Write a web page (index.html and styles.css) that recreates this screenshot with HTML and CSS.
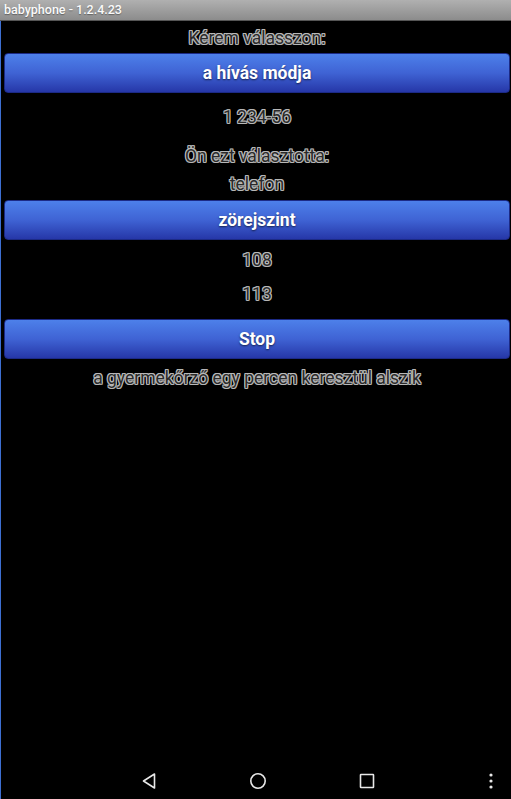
FILE: index.html
```html
<!DOCTYPE html>
<html lang="hu">
<head>
<meta charset="utf-8">
<title>babyphone</title>
<link rel="stylesheet" href="styles.css">
</head>
<body>
<div class="app">
  <header class="titlebar">babyphone - 1.2.4.23</header>
  <main class="screen">
    <section class="content">
      <div class="label prompt">Kérem válasszon:</div>
      <button class="btn btn-first">a hívás módja</button>
      <div class="label num">1 234-56</div>
      <div class="label chosen">Ön ezt választotta:</div>
      <div class="label choice">telefon</div>
      <button class="btn btn-second">zörejszint</button>
      <div class="label lvl1">108</div>
      <div class="label lvl2">113</div>
      <button class="btn btn-third">Stop</button>
      <div class="label info">a gyermekőrző egy percen keresztül alszik</div>
    </section>
    <nav class="navbar">
      <svg class="nav-icon back" width="16" height="18" viewBox="0 0 16 18"><path d="M13.5 2 L2.5 9 L13.5 16 Z" fill="none" stroke="#e8e8e8" stroke-width="1.6" stroke-linejoin="round"/></svg>
      <svg class="nav-icon home" width="18" height="18" viewBox="0 0 18 18"><circle cx="9" cy="9" r="7.2" fill="none" stroke="#e8e8e8" stroke-width="1.6"/></svg>
      <svg class="nav-icon recent" width="16" height="16" viewBox="0 0 16 16"><rect x="1.5" y="1.5" width="13" height="13" rx="0.5" fill="none" stroke="#e8e8e8" stroke-width="1.6"/></svg>
      <svg class="nav-icon more" width="6" height="18" viewBox="0 0 6 18"><circle cx="3" cy="3" r="1.6" fill="#e8e8e8"/><circle cx="3" cy="9" r="1.6" fill="#e8e8e8"/><circle cx="3" cy="15" r="1.6" fill="#e8e8e8"/></svg>
    </nav>
  </main>
</div>
</body>
</html>
```
FILE: styles.css
```css
html, body {
  margin: 0;
  padding: 0;
  background: #000;
  height: 100%;
}
body {
  font-family: Roboto, "Liberation Sans", sans-serif;
}
.app {
  display: flex;
  flex-direction: column;
  height: 799px;
}
.titlebar {
  flex: none;
  height: 21px;
  box-sizing: border-box;
  background: linear-gradient(#b0b0b0, #8c8c8c);
  border-bottom: 1px solid #555;
  color: #fafafa;
  font-size: 12.5px;
  font-weight: 500;
  line-height: 20px;
  padding-left: 4px;
  text-shadow: 0 1px 1px rgba(0,0,0,0.35);
}
.screen {
  flex: 1;
  display: flex;
  flex-direction: column;
  border-left: 1px solid #3d6fd2;
}
.content {
  flex: 1;
  display: flex;
  flex-direction: column;
  padding: 0 1px 0 3px;
}
.label {
  text-align: center;
  font-size: 17.5px;
  line-height: 24px;
  height: 24px;
  color: #2a2a2a;
  text-shadow:
    1px 0 0 #b8b8b8, -1px 0 0 #b8b8b8, 0 1px 0 #b8b8b8, 0 -1px 0 #b8b8b8,
    1px 1px 0 #9a9a9a, -1px -1px 0 #b8b8b8, 1px -1px 0 #b8b8b8, -1px 1px 0 #9a9a9a;
}
.prompt { margin-top: 5px; margin-bottom: 3px; }
.num { margin-top: 12px; }
.chosen { margin-top: 15px; }
.choice { margin-top: 4px; }
.lvl1 { margin-top: 8px; }
.lvl2 { margin-top: 10px; }
.info { margin-top: 7px; }
.btn {
  display: block;
  width: 100%;
  height: 40px;
  border: 1px solid #1c2a86;
  border-radius: 4px;
  background: linear-gradient(#4d80ea, #3f63d4 50%, #2637a8);
  color: #fff;
  font-family: Roboto, "Liberation Sans", sans-serif;
  font-size: 17.5px;
  font-weight: 700;
  text-shadow: 0 1px 2px rgba(0,0,0,0.6);
  padding: 0;
  flex: none;
}
.btn-second { margin-top: 4px; }
.btn-third { margin-top: 13px; }
.navbar {
  height: 48px;
  flex: none;
  display: grid;
  grid-template-columns: 140px 16px 92px 18px 92px 16px 1fr 6px 17px;
  align-items: center;
}
.nav-icon { margin-top: 12px; }
.back { grid-column: 2; }
.home { grid-column: 4; }
.recent { grid-column: 6; }
.more { grid-column: 8; }
```
